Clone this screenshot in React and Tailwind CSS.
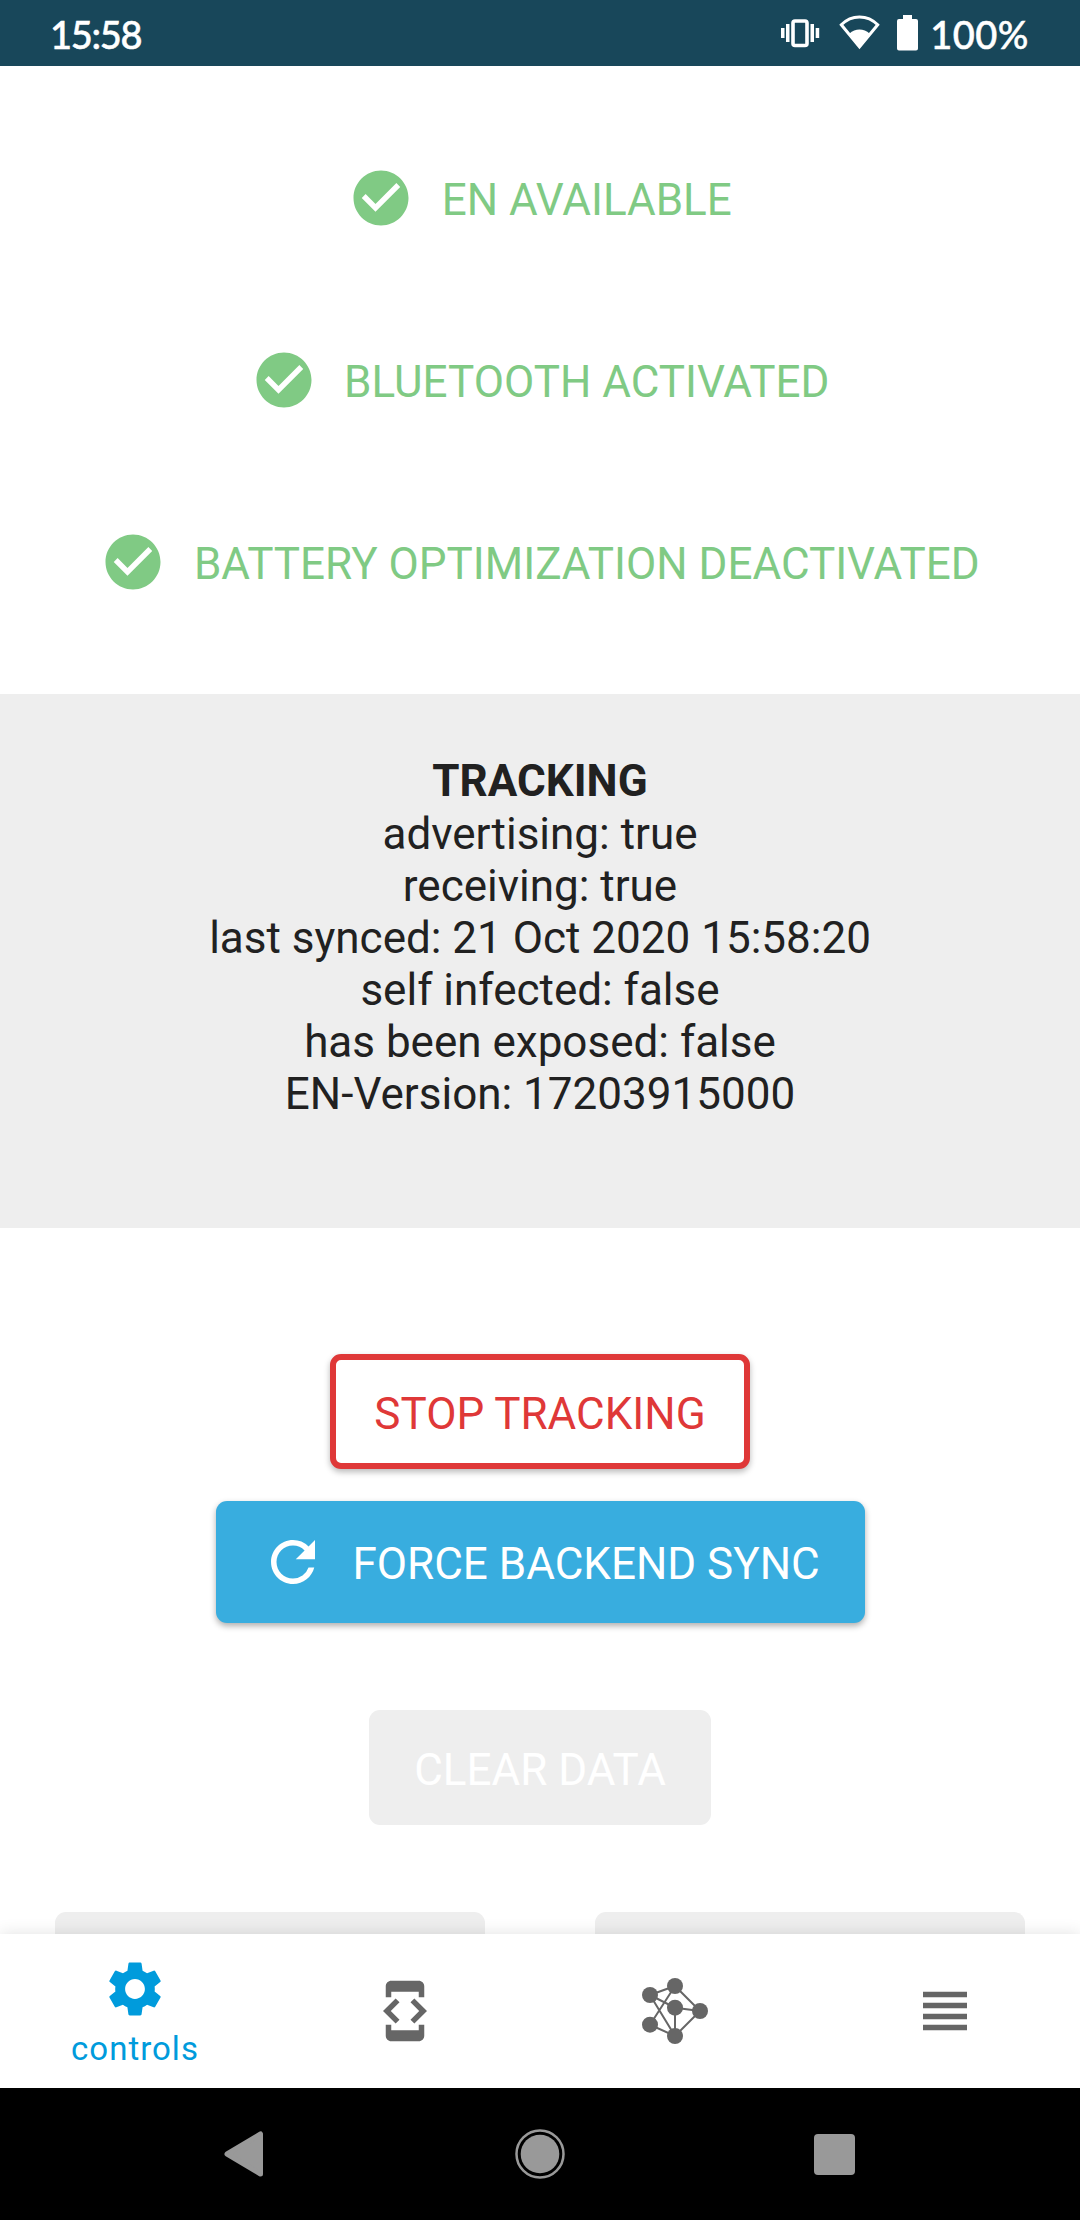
import React from "react";
import { MdCheckCircle, MdRefresh, MdSettings, MdDeveloperMode, MdViewHeadline } from "react-icons/md";

function StatusBar() {
  return (
    <header className="flex h-[66px] shrink-0 items-center justify-between bg-[#18475a] pl-[50px] pr-[51px] font-['Lato'] text-[38px] font-medium leading-[66px] text-white">
      <span className="w-[94px] whitespace-nowrap pt-[2px] tracking-[-1.300px] [-webkit-text-stroke:0.5px_#fff]">15:58</span>
      <div className="flex h-full items-center">
        <svg className="mr-[19px]" width="40" height="30" viewBox="0 0 40 30" fill="#fff">
          <rect x="1" y="10" width="3.5" height="10" />
          <rect x="6" y="6" width="3.5" height="18" />
          <rect x="30.500" y="6" width="3.500" height="18" />
          <rect x="35.700" y="10" width="3.500" height="10" />
          <rect x="13" y="3" width="14" height="24.500" rx="2" fill="none" stroke="#fff" strokeWidth="3.600" />
        </svg>
        <svg className="mr-[17px]" width="41" height="36" viewBox="0 0 41 36">
          <path d="M2.300 9.800C12.500-.7 28.500-.7 38.700 9.800L20.500 32Z" fill="none" stroke="#fff" strokeWidth="3" />
          <path d="M10.500 18.500C16 13 25 13 30.500 18.500L20.500 33Z" fill="#fff" />
        </svg>
        <svg className="mr-[12px]" width="21" height="36" viewBox="0 0 21 36" fill="#fff">
          <path d="M6 0h9v4h4a2 2 0 0 1 2 2v27.500a2 2 0 0 1-2 2H2a2 2 0 0 1-2-2V6a2 2 0 0 1 2-2h4z" />
        </svg>
        <span className="whitespace-nowrap pt-[2px] tracking-[0.500px] [-webkit-text-stroke:0.5px_#fff]">100%</span>
      </div>
    </header>
  );
}

function CheckRow({ label }) {
  return (
    <div className="flex h-[182px] items-center justify-center gap-[27.500px] text-[#80ca84]">
      <MdCheckCircle size={66} />
      <span className="pt-[3px] leading-[52px]">{label}</span>
    </div>
  );
}

const checks = ["EN AVAILABLE", "BLUETOOTH ACTIVATED", "BATTERY OPTIMIZATION DEACTIVATED"];
const details = [
  "advertising: true",
  "receiving: true",
  "last synced: 21 Oct 2020 15:58:20",
  "self infected: false",
  "has been exposed: false",
  "EN-Version: 17203915000",
];

function NetworkIcon() {
  return (
    <svg width="66" height="66" viewBox="0 0 66 66" fill="#666">
      <path
        d="M8 17L33 8L58 33L33 58L8 46.700L33 8M8 17L33 29.700L58 33M8 17L33 58V29.700"
        fill="none"
        stroke="#666"
        strokeWidth="2"
      />
      <circle cx="8" cy="17" r="8" />
      <circle cx="33" cy="8" r="8" />
      <circle cx="33" cy="29.700" r="8" />
      <circle cx="58" cy="33" r="8" />
      <circle cx="8" cy="46.700" r="8" />
      <circle cx="33" cy="58" r="8" />
    </svg>
  );
}

export default function App() {
  return (
    <div className="flex h-[2220px] w-[1080px] flex-col overflow-hidden bg-white font-['Roboto',sans-serif] text-[44px] text-[#212121]">
      <StatusBar />
      <main className="flex h-[1868px] shrink-0 flex-col overflow-hidden">
        <section className="flex h-[628px] shrink-0 flex-col pt-[41px]">
          {checks.map((c) => (
            <CheckRow key={c} label={c} />
          ))}
        </section>
        <section className="h-[534px] shrink-0 bg-[#eee] pt-[61px] text-center leading-[52px]">
          <h2 className="mb-px font-bold">TRACKING</h2>
          {details.map((d) => (
            <p key={d}>{d}</p>
          ))}
        </section>
        <section className="flex shrink-0 flex-col items-center pt-[126px]">
          <button className="h-[115px] w-[420px] rounded-[11px] border-[6px] border-[#df3838] bg-white pt-[5px] text-[#df3838] shadow-[0_3px_6px_rgba(0,0,0,0.28)]">
            STOP TRACKING
          </button>
          <button className="mt-8 flex h-[122px] w-[649px] items-center rounded-[11px] bg-[#38addf] pl-[44px] text-white shadow-[0_3px_6px_rgba(0,0,0,0.32)]">
            <MdRefresh size={66} />
            <span className="ml-[27px] pt-[3px]">FORCE BACKEND SYNC</span>
          </button>
          <button className="mt-[87px] h-[115px] w-[342px] rounded-[11px] bg-[#eee] pt-[5px] text-white">CLEAR DATA</button>
          <div className="mt-[87px] flex w-full justify-between px-[55px]">
            <div className="h-[115px] w-[430px] rounded-[11px] bg-[#eee]" />
            <div className="h-[115px] w-[430px] rounded-[11px] bg-[#eee]" />
          </div>
        </section>
      </main>
      <nav className="relative grid h-[154px] shrink-0 grid-cols-4 bg-white text-[#666] shadow-[0_0_16px_rgba(0,0,0,0.12)]">
        <a className="flex flex-col items-center pt-[22px] text-[#009bdc]">
          <MdSettings size={66} />
          <span className="mt-[7px] text-[33px] leading-[39px] tracking-[1px]">controls</span>
        </a>
        <a className="flex items-center justify-center">
          <MdDeveloperMode size={66} />
        </a>
        <a className="flex items-center justify-center">
          <NetworkIcon />
        </a>
        <a className="flex items-center justify-center">
          <MdViewHeadline size={66} />
        </a>
      </nav>
      <footer className="relative flex h-[132px] shrink-0 items-center justify-between bg-black pl-[224px] pr-[225px]">
        <svg width="42" height="46" viewBox="0 0 42 46">
          <path d="M3 23L36.500 3V43Z" fill="#999" stroke="#999" strokeWidth="5" strokeLinejoin="round" />
        </svg>
        <svg width="50" height="50" viewBox="0 0 50 50">
          <circle cx="25" cy="25" r="23.500" fill="none" stroke="#999" strokeWidth="2.500" />
          <circle cx="25" cy="25" r="19.300" fill="#999" />
        </svg>
        <span className="h-[41px] w-[41px] rounded-[4px] bg-[#999]" />
      </footer>
    </div>
  );
}
